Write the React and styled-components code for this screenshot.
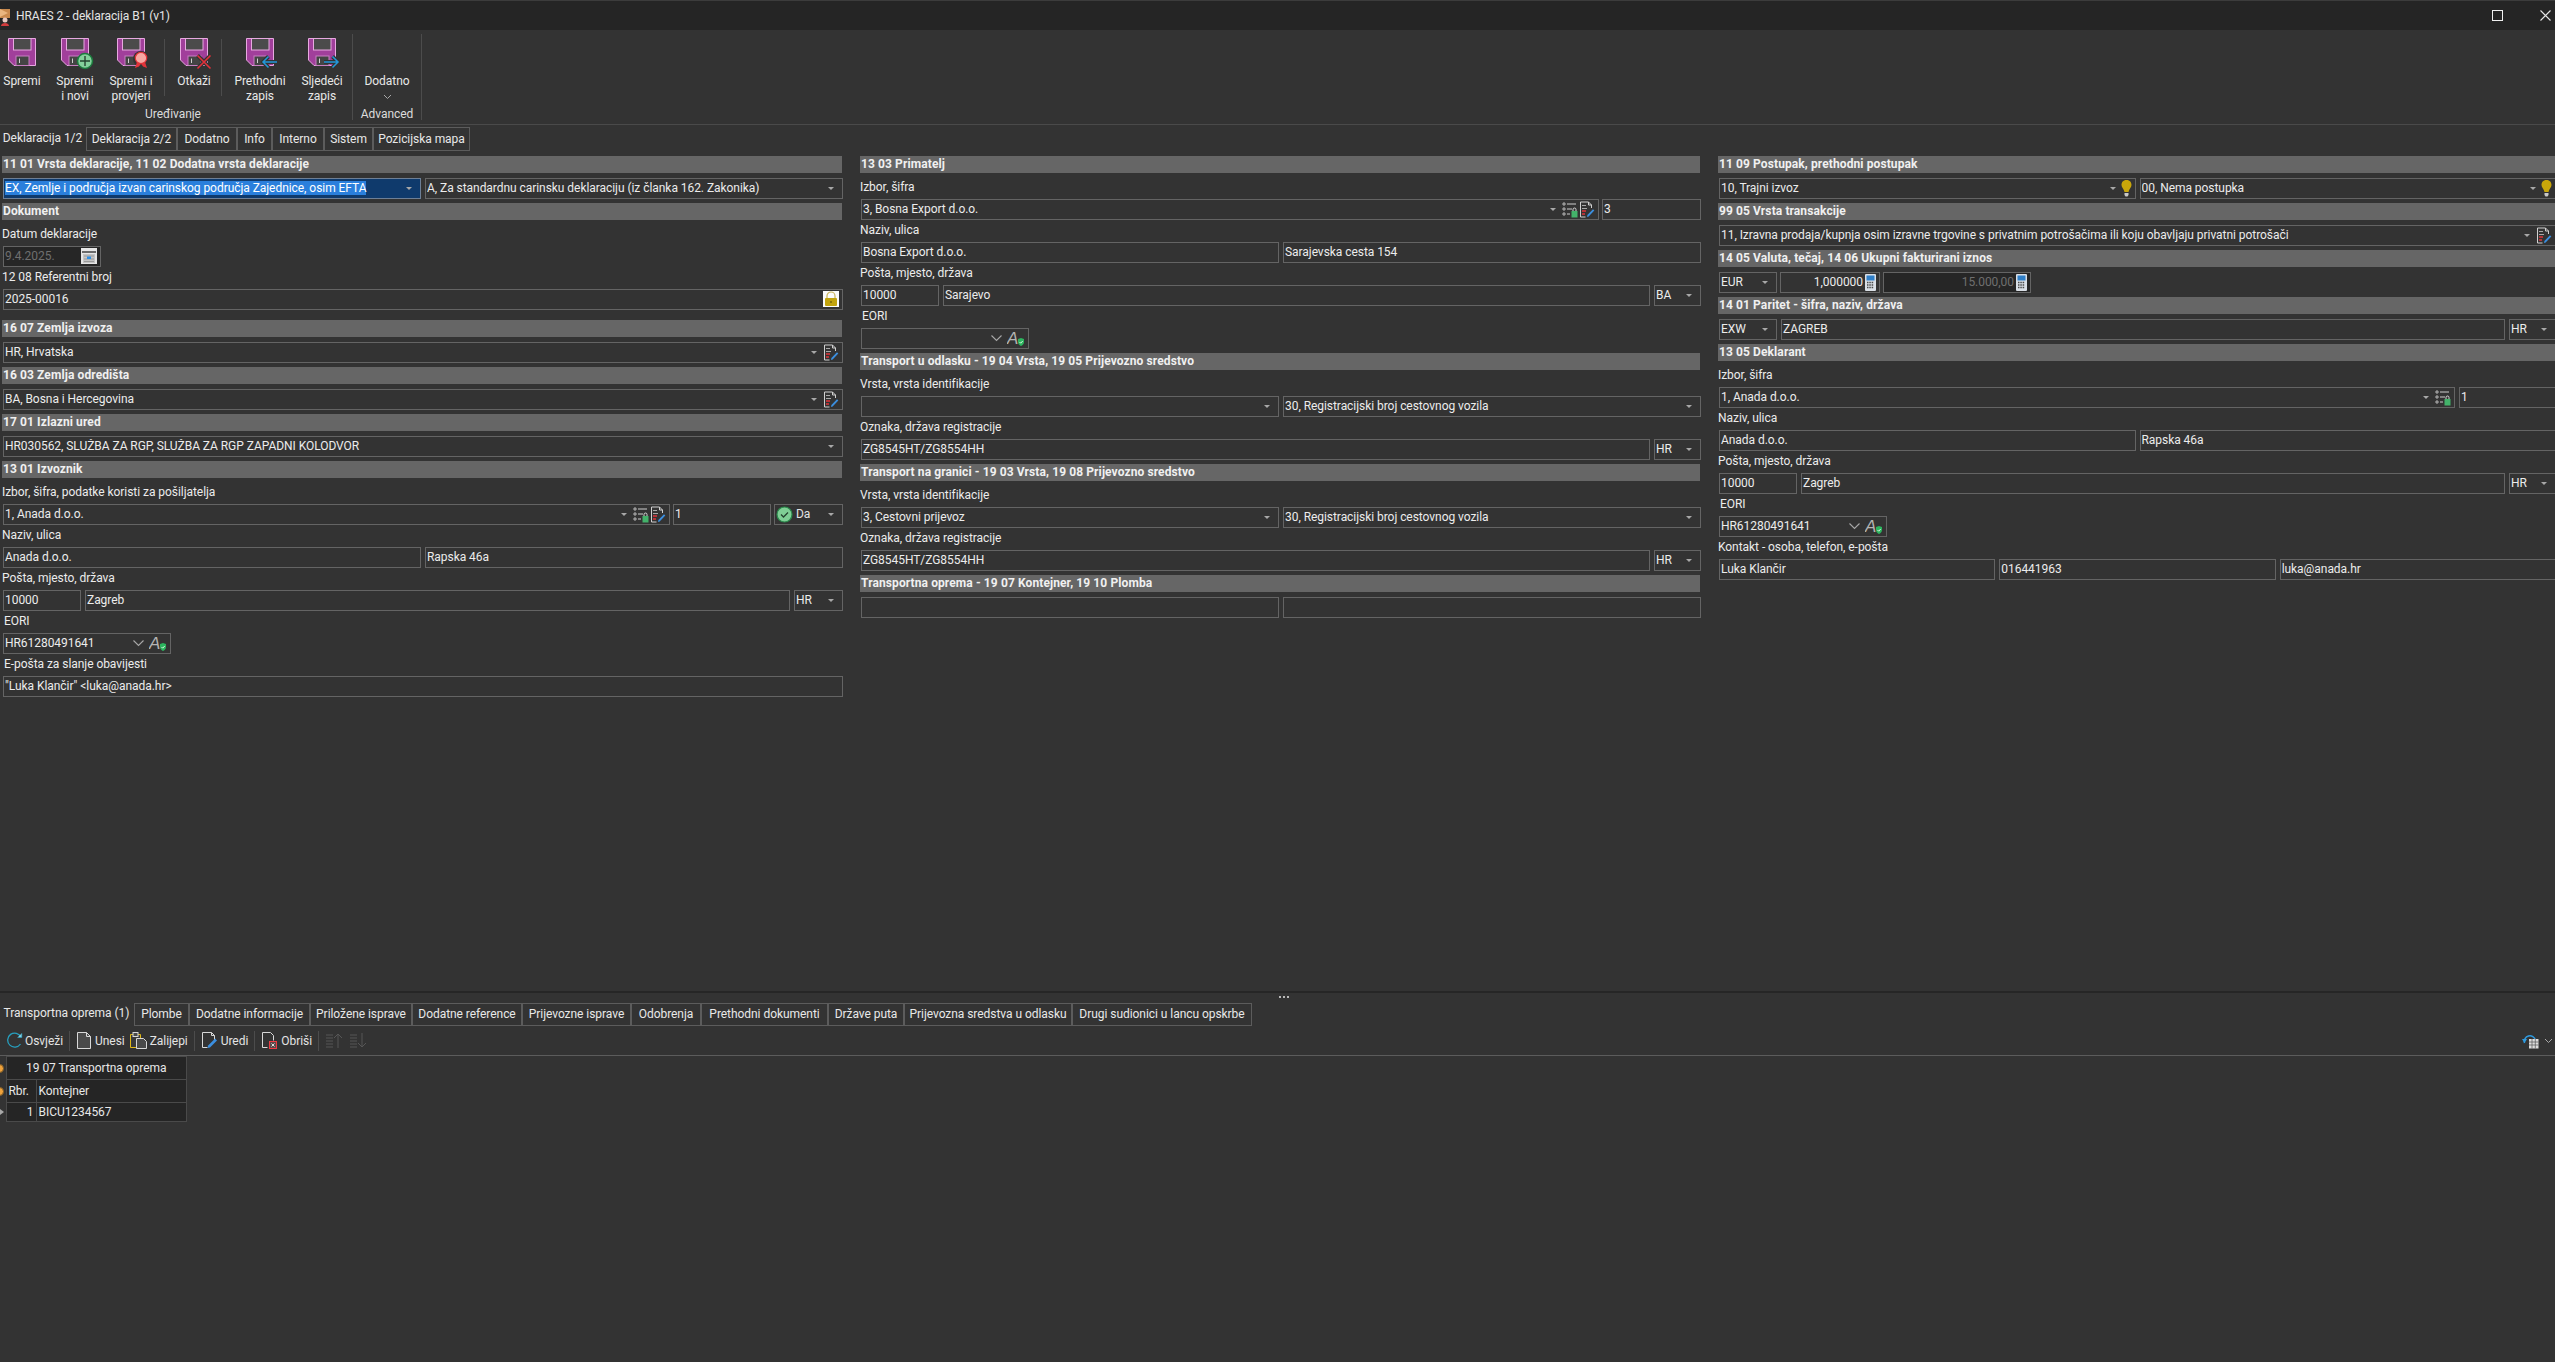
import React from 'react';
import styled, { createGlobalStyle } from 'styled-components';

const GlobalStyle = createGlobalStyle`
  html, body { margin: 0; padding: 0; background: #333333; }
  body { font-family: Roboto, "Noto Sans", sans-serif; font-size: 12px; letter-spacing: -0.05px; color: #ececec; }
  #root { height: 100vh; }
  * { box-sizing: border-box; }
`;

const Page = styled.div`
  height: 100vh;
  display: flex;
  flex-direction: column;
  overflow: hidden;
`;

const TitleBar = styled.div`
  height: 30px;
  flex: none;
  display: flex;
  align-items: center;
  background: #252525;
  border-top: 1px solid #3c3c3c;
`;

const TitleText = styled.span`
  margin-left: 6px;
  color: #e4e4e4;
  flex: 1;
`;

const WindowButton = styled.span`
  width: ${p => p.$w}px;
  display: flex;
  justify-content: center;
  align-items: center;
  margin-right: ${p => p.$mr || 0}px;
`;

const Ribbon = styled.div`
  height: 95px;
  flex: none;
  display: flex;
  border-bottom: 1px solid #4a4a4a;
`;

const RibbonGroup = styled.div`
  display: flex;
  flex-direction: column;
  padding-right: ${p => p.$pr || 0}px;
  margin-top: 4px;
  height: 86px;
  border-right: 1px solid #4c4c4c;
`;

const RibbonItems = styled.div`
  display: flex;
  height: 70px;
`;

const RibbonButton = styled.div`
  width: ${p => p.$w}px;
  display: flex;
  flex-direction: column;
  align-items: center;
  padding-top: 4px;
  text-align: center;
  line-height: 15px;
  color: #e8e8e8;
  svg { flex: none; margin-bottom: 8px; }
`;

const RibbonSpacer = styled.span`
  height: 36px;
  flex: none;
`;

const RibbonCaret = styled.svg`
  margin-top: 5px;
`;

const RibbonSep = styled.div`
  width: 1px;
  height: 57px;
  margin: 5px ${p => p.$r}px 0 ${p => p.$l}px;
  background: #4c4c4c;
`;

const GroupLabel = styled.div`
  text-align: center;
  line-height: 20px;
  color: #dcdcdc;
`;

const TabStrip = styled.div`
  display: flex;
  flex: none;
  height: ${p => p.$h}px;
`;

const Tab = styled.div`
  width: ${p => p.$w}px;
  margin-top: ${p => (p.$active ? 0 : 2)}px;
  padding-bottom: 1px;
  border: 1px solid ${p => (p.$active ? 'transparent' : '#5c5c5c')};
  border-left-width: ${p => (p.$first ? 0 : 1)}px;
  display: flex;
  align-items: center;
  justify-content: center;
  white-space: nowrap;
  color: #e8e8e8;
`;

const FormArea = styled.div`
  flex: 1;
  min-height: 0;
  display: grid;
  grid-template-columns: 840px 840px 837px;
  column-gap: 18px;
  align-items: start;
  padding: 5px 0 0 2px;
  overflow: hidden;
`;

const Column = styled.div`
  min-width: 0;
`;

const Section = styled.section`
  margin-bottom: ${p => p.$mb || 4}px;
`;

const SectionTitle = styled.h3`
  margin: 0 0 4px;
  height: 17px;
  padding-left: 1px;
  background: #666666;
  font-size: 12px;
  letter-spacing: 0.1px;
  line-height: 16px;
  font-weight: 700;
  color: #f0f0f0;
  white-space: nowrap;
`;

const Row = styled.div`
  display: grid;
  grid-template-columns: ${p => p.$cols || '1fr'};
  column-gap: ${p => (p.$gap === undefined ? 4 : p.$gap)}px;
  margin: 0 -1px 0 1px;
  ${SectionTitle} + & { margin-top: 5px; }
`;

const FieldLabel = styled.div`
  height: 22px;
  line-height: 20px;
  padding-left: ${p => p.$indent || 0}px;
  color: #ececec;
  white-space: nowrap;
`;

const Field = styled.div`
  height: 21px;
  min-width: 0;
  display: flex;
  align-items: center;
  padding: 0 3px 1px 1px;
  border: 1px solid #646464;
  background: ${p => (p.$disabled ? '#262626' : 'transparent')};
  color: ${p => (p.$disabled ? '#6f6f6f' : '#ececec')};
  overflow: hidden;
  white-space: nowrap;
  ${p => p.$width && `width: ${p.$width}px;`}
  ${p => p.$selected && 'background: #0f3a6c; border-color: #6d7f96;'}
  svg { flex: none; }
`;

const FieldText = styled.span`
  flex: 1;
  min-width: 0;
  overflow: hidden;
  text-align: ${p => (p.$right ? 'right' : 'left')};
  padding-right: ${p => (p.$right ? 2 : 0)}px;
`;

const Highlight = styled.span`
  background: #2a7fdc;
  color: #ffffff;
`;

const DropArrow = styled.i`
  flex: none;
  width: 0;
  height: 0;
  margin: 0 5px 0 4px;
  border-left: 3px solid transparent;
  border-right: 3px solid transparent;
  border-top: 3px solid #a8a8a8;
`;

const Chevron = styled.svg`
  margin-right: 4px;
`;

const Splitter = styled.div`
  height: 10px;
  flex: none;
  border-top: 2px solid #262626;
  display: flex;
  align-items: center;
  justify-content: center;
  padding-left: 12px;
`;

const GripDot = styled.i`
  width: 2px;
  height: 2px;
  margin: 0 1px;
  background: #b8b8b8;
`;

const BottomPanel = styled.div`
  height: 361px;
  flex: none;
`;

const Toolbar = styled.div`
  height: 30px;
  display: flex;
  align-items: center;
  padding-left: 6px;
  border-bottom: 1px solid #5c5c5c;
`;

const ToolButton = styled.div`
  display: flex;
  align-items: center;
  gap: ${p => p.$gap || 4}px;
  margin-right: ${p => p.$mr || 0}px;
  color: #e4e4e4;
  white-space: nowrap;
`;

const ToolSep = styled.i`
  width: 1px;
  height: 20px;
  background: #4c4c4c;
  margin: 0 7px 0 6px;
`;

const ToolRight = styled.div`
  margin-left: auto;
  margin-right: 2px;
  display: flex;
  align-items: center;
  gap: 5px;
`;

const GridTable = styled.table`
  border-collapse: collapse;
  table-layout: fixed;
  width: 187px;
  color: #e8e8e8;
`;

const Cell = styled.td`
  height: ${p => p.$h}px;
  padding: 0 2px;
  background: #252525;
  border: 1px solid #4a4a4a;
  text-align: ${p => p.$align || 'left'};
  white-space: nowrap;
  overflow: hidden;
`;

const IndicatorCell = styled.td`
  width: 6px;
  padding: 0;
  border: 0;
  overflow: hidden;
`;

const IndicatorStar = styled.i`
  display: block;
  width: 9px;
  height: 9px;
  margin-left: -5px;
  border-radius: 50%;
  background: #efa23c;
  border: 1px solid #7d5a24;
`;

const IndicatorArrow = styled.i`
  display: block;
  width: 0;
  height: 0;
  border-left: 4px solid #a8a8a8;
  border-top: 3px solid transparent;
  border-bottom: 3px solid transparent;
`;

// ikone

const FloppyIcon = ({ badge }) => (
  <svg width="28" height="28" viewBox="0 0 28 28" style={{ overflow: 'visible' }}>
    <path d="M.5.5h27v27H6L.5 22z" fill="#a13f9b" stroke="#e7a9e0" />
    <rect x="5.5" y=".5" width="17.5" height="11.5" fill="#4b4b4b" stroke="#e7a9e0" />
    <rect x="8" y="18" width="13" height="9.5" fill="#444444" stroke="#c77fc1" />
    <rect x="11" y="20.5" width="1" height="4.5" fill="#cfcfcf" />
    {badge === 'plus' && (
      <g>
        <circle cx="24" cy="23" r="7.5" fill="#83d19b" stroke="#1d7a3e" strokeWidth="1.5" />
        <path d="M24 18v10M19 23h10" stroke="#24442f" strokeWidth="1.4" />
      </g>
    )}
    {badge === 'award' && (
      <g>
        <circle cx="24" cy="21" r="8" fill="#333333" />
        <path d="M20 24l-2 6 4-1.500 2-3 2 3 4 1.500-2-6z" fill="#e2343a" />
        <circle cx="24" cy="20" r="5.700" fill="#f7a8a3" stroke="#e2343a" strokeWidth="1.200" />
      </g>
    )}
    {badge === 'cancel' && (
      <g>
        <path d="M17.500 17.500l13 13M30.500 17.500l-13 13" stroke="#333333" strokeWidth="4" />
        <path d="M17.500 17.500l13 13M30.500 17.500l-13 13" stroke="#e3303a" strokeWidth="1.600" />
      </g>
    )}
    {badge === 'prev' && (
      <g fill="none">
        <path d="M31 24H17M22.500 18.500L17 24l5.500 5.500" stroke="#333333" strokeWidth="4" />
        <path d="M31 24H17M22.500 18.500L17 24l5.500 5.500" stroke="#2398da" strokeWidth="1.500" />
      </g>
    )}
    {badge === 'next' && (
      <g fill="none">
        <path d="M16 24h14M24.500 18.500L30 24l-5.500 5.500" stroke="#333333" strokeWidth="4" />
        <path d="M16 24h14M24.500 18.500L30 24l-5.500 5.500" stroke="#2398da" strokeWidth="1.500" />
      </g>
    )}
  </svg>
);

const AppIcon = () => (
  <svg width="10" height="20" viewBox="0 0 10 20">
    <path d="M0 3h10v9H0z" fill="#c98a4e" />
    <path d="M0 3l8 4-8 4z" fill="#e9b680" />
    <circle cx="5" cy="14" r="2.500" fill="#e8c9c0" />
    <path d="M1 20c0-4 8-4 8 0z" fill="#d23c3c" />
  </svg>
);

const EditIcon = () => (
  <svg width="17" height="17" viewBox="0 0 17 17">
    <path d="M2.500 1h8l3 3v3M2.500 1v15h5M10.500 1v3h3" fill="none" stroke="#d0d0d0" />
    <path d="M4 10h4M4 13h3" stroke="#e0343a" strokeWidth="1.400" />
    <path d="M4 4.500h4M4 7.500h5" stroke="#a8a8a8" />
    <path d="M9 16l.4-2 5.600-5.800 1.300 1.300-5.600 5.900z" fill="#3b8fe0" />
  </svg>
);

const ListLockIcon = () => (
  <svg width="17" height="17" viewBox="0 0 17 17">
    <path d="M2 2h2v2H2zM2 7h2v2H2zM2 12h2v2H2z" fill="none" stroke="#cfcfcf" strokeWidth=".8" />
    <path d="M6 3h9M6 8h5M6 13h3" stroke="#cfcfcf" />
    <rect x="10.500" y="10" width="6" height="6.500" fill="#43b26a" />
    <path d="M12 10V8.500a1.500 1.500 0 013 0V10" fill="none" stroke="#d8d8d8" />
  </svg>
);

const BulbIcon = () => (
  <svg width="11" height="17" viewBox="0 0 11 17">
    <path d="M5.500 0C2 0 .5 2.500.5 5c0 2.500 2.500 4 3 7h4c.5-3 3-4.500 3-7 0-2.500-1.500-5-5-5z" fill="#c9a60a" />
    <path d="M3.500 13h4v2l-1 1.500h-2l-1-1.500z" fill="#c9c9c9" />
  </svg>
);

const LockIcon = () => (
  <svg width="16" height="16" viewBox="0 0 16 16">
    <rect width="16" height="16" fill="#fbfbfb" />
    <path d="M4 7V5a4 4 0 018 0v2" fill="none" stroke="#c8b45a" strokeWidth="1.200" />
    <rect x="2" y="7" width="12" height="8" rx="1" fill="#c2a40e" />
    <circle cx="8" cy="11" r="1" fill="#7a680a" />
  </svg>
);

const CalendarIcon = () => (
  <svg width="16" height="16" viewBox="0 0 16 16">
    <rect width="16" height="16" fill="#e6e6e6" />
    <rect x="1" y="3" width="14" height="2" fill="#6a6a6a" />
    <rect x="2" y="6" width="12" height="9" fill="#c4c4c4" />
    <path d="M3 8h10M3 11h10M3 13.500h10" stroke="#9a9a9a" />
    <rect x="6" y="8.500" width="4" height="2.500" fill="#2f8fe4" />
  </svg>
);

const CalcIcon = () => (
  <svg width="11" height="17" viewBox="0 0 11 17">
    <rect width="11" height="17" rx="1" fill="#d9dfe6" />
    <rect x="1.500" y="1.500" width="8" height="5" fill="#2f7fc8" />
    <path d="M2 8.500h7M2 11h7M2 13.500h7" stroke="#4a4a4a" strokeWidth="1.400" strokeDasharray="1.500 .8" />
  </svg>
);

const CheckCircleIcon = () => (
  <svg width="17" height="17" viewBox="0 0 17 17">
    <circle cx="8.500" cy="8.500" r="7.500" fill="#7fcf95" stroke="#2a8a4c" strokeWidth="1.200" />
    <path d="M5 8.500l2.500 2.500 4.500-4.500" fill="none" stroke="#24442f" strokeWidth="1.300" />
  </svg>
);

const ValidateIcon = () => (
  <svg width="18" height="17" viewBox="0 0 18 17">
    <text x="0" y="14" fontFamily="Liberation Sans, sans-serif" fontStyle="italic" fontSize="17" fill="#b4b4b4">A</text>
    <path d="M11 9l3-1 3 1v3c0 2-1.700 3.500-3 4-1.300-.5-3-2-3-4z" fill="#2cb45e" />
    <path d="M12.500 12l1.200 1.200 2-2.200" fill="none" stroke="#d9f5e2" />
  </svg>
);

const DownChevron = () => (
  <Chevron width="13" height="8" viewBox="0 0 13 8">
    <path d="M1.500 1.500l5 5 5-5" fill="none" stroke="#a8a8a8" strokeWidth="1.100" />
  </Chevron>
);

const RefreshIcon = () => (
  <svg width="17" height="17" viewBox="0 0 17 17">
    <path d="M14.500 12a7 7 0 11.500-7" fill="none" stroke="#27a0bf" strokeWidth="1.300" />
    <path d="M15.800 1.200v4.300h-4.300" fill="#7fd0e4" stroke="#27a0bf" strokeWidth=".6" />
  </svg>
);

const PageIcon = () => (
  <svg width="14" height="17" viewBox="0 0 14 17">
    <path d="M.5.500h9l4 4v12H.500z" fill="#4a4a4a" stroke="#d8d8d8" />
    <path d="M9.500.500v4h4" fill="none" stroke="#d8d8d8" />
  </svg>
);

const PasteIcon = () => (
  <svg width="17" height="17" viewBox="0 0 17 17">
    <path d="M.5 2.500h10v13H.500z" fill="#3a3a3a" stroke="#e0b818" />
    <rect x="3" y=".5" width="5" height="4" fill="#4a4a4a" stroke="#d8d8d8" />
    <path d="M6.500 6.500h7l3 3v7h-10z" fill="#4a4a4a" stroke="#d8d8d8" />
  </svg>
);

const PageEditIcon = () => (
  <svg width="17" height="17" viewBox="0 0 17 17">
    <path d="M.5.500h9l3 3v6M.500.500v15h5M9.500.500v3h3" fill="none" stroke="#d8d8d8" />
    <path d="M5.500 16l.6-2.500 7-7 1.900 1.900-7 7z" fill="#3b8fe0" />
  </svg>
);

const PageDeleteIcon = () => (
  <svg width="15" height="17" viewBox="0 0 15 17">
    <path d="M.5.500h8l3 3v5M.500.500v15h5" fill="none" stroke="#d8d8d8" />
    <rect x="7.500" y="9.500" width="7" height="7" fill="#5b4a4a" stroke="#ef3b43" />
    <path d="M9.500 11.500l3 3M12.500 11.500l-3 3" stroke="#e0e0e0" />
  </svg>
);

const MoveIcon = ({ down }) => (
  <svg width="17" height="17" viewBox="0 0 17 17">
    <path d="M0 3h7M0 6h7M0 9h7M0 12h7M0 15h7" stroke="#565656" />
    <path d={down ? 'M12 1v14M8 11l4 4 4-4' : 'M12 16V2M8 6l4-4 4 4'} fill="none" stroke="#565656" />
  </svg>
);

const LayoutIcon = () => (
  <svg width="17" height="17" viewBox="0 0 17 17">
    <path d="M2.500 11a5.500 5.500 0 0111 -3" fill="none" stroke="#2f9be0" strokeWidth="1.500" />
    <path d="M0 7l2.500 4L5 7z" fill="#2f9be0" />
    <rect x="7" y="7" width="9.500" height="9.500" fill="#dcdcdc" />
    <path d="M7 10h9.500M7 13h9.500M10 7v9.500M13.300 7v9.500" stroke="#555" strokeWidth=".7" />
  </svg>
);

// podaci

const mainTabs = [
  ['Deklaracija 1/2', 86], ['Deklaracija 2/2', 91], ['Dodatno', 60], ['Info', 35],
  ['Interno', 52], ['Sistem', 49], ['Pozicijska mapa', 97],
];

const lowerTabs = [
  ['Transportna oprema (1)', 134], ['Plombe', 55], ['Dodatne informacije', 121], ['Priložene isprave', 102],
  ['Dodatne reference', 110], ['Prijevozne isprave', 109], ['Odobrenja', 70], ['Prethodni dokumenti', 127],
  ['Države puta', 76], ['Prijevozna sredstva u odlasku', 168], ['Drugi sudionici u lancu opskrbe', 180],
];

const Select = ({ children, icon, ...rest }) => (
  <Field {...rest}>
    <FieldText>{children}</FieldText>
    <DropArrow />
    {icon}
  </Field>
);

const TabRow = ({ tabs, height }) => (
  <TabStrip $h={height}>
    {tabs.map(([label, w], i) => (
      <Tab key={label} $w={w} $active={i === 0} $first={i === 0}>{label}</Tab>
    ))}
  </TabStrip>
);

const Eori = ({ value }) => (
  <Field $width={168}>
    <FieldText>{value}</FieldText>
    <DownChevron />
    <ValidateIcon />
  </Field>
);

const Exporter = () => (
  <Section>
    <SectionTitle>13 01 Izvoznik</SectionTitle>
    <FieldLabel>Izbor, šifra, podatke koristi za pošiljatelja</FieldLabel>
    <Row $cols="1fr 98px 69px" $gap={3}>
      <Select icon={<><ListLockIcon /><EditIcon /></>}>1, Anada d.o.o.</Select>
      <Field>1</Field>
      <Select>
        <ToolButton $gap={3}><CheckCircleIcon />Da</ToolButton>
      </Select>
    </Row>
    <FieldLabel>Naziv, ulica</FieldLabel>
    <Row $cols="1fr 1fr">
      <Field>Anada d.o.o.</Field>
      <Field>Rapska 46a</Field>
    </Row>
    <FieldLabel>Pošta, mjesto, država</FieldLabel>
    <Row $cols="78px 1fr 49px">
      <Field>10000</Field>
      <Field>Zagreb</Field>
      <Select>HR</Select>
    </Row>
    <FieldLabel $indent={2}>EORI</FieldLabel>
    <Row><Eori value="HR61280491641" /></Row>
    <FieldLabel $indent={2}>E-pošta za slanje obavijesti</FieldLabel>
    <Row><Field>"Luka Klančir" &lt;luka@anada.hr&gt;</Field></Row>
  </Section>
);

const TransportBlock = ({ title, kind }) => (
  <Section>
    <SectionTitle>{title}</SectionTitle>
    <FieldLabel>Vrsta, vrsta identifikacije</FieldLabel>
    <Row $cols="1fr 1fr">
      <Select>{kind}</Select>
      <Select>30, Registracijski broj cestovnog vozila</Select>
    </Row>
    <FieldLabel>Oznaka, država registracije</FieldLabel>
    <Row $cols="1fr 47px">
      <Field>ZG8545HT/ZG8554HH</Field>
      <Select>HR</Select>
    </Row>
  </Section>
);

export default function App() {
  return (
    <Page>
      <GlobalStyle />
      <TitleBar>
        <AppIcon />
        <TitleText>HRAES 2 - deklaracija B1 (v1)</TitleText>
        <WindowButton $w={48} $mr={14}>
          <svg width="11" height="11" viewBox="0 0 11 11"><rect x=".5" y=".5" width="10" height="10" fill="none" stroke="#f0f0f0" /></svg>
        </WindowButton>
        <WindowButton $w={20}>
          <svg width="11" height="11" viewBox="0 0 11 11"><path d="M.5.5l10 10M10.500.5l-10 10" stroke="#e6e6e6" strokeWidth="1.100" /></svg>
        </WindowButton>
      </TitleBar>

      <Ribbon>
        <RibbonGroup $pr={6}>
          <RibbonItems>
            <RibbonButton $w={44}><FloppyIcon />Spremi</RibbonButton>
            <RibbonButton $w={62}><FloppyIcon badge="plus" />Spremi<br />i novi</RibbonButton>
            <RibbonButton $w={50}><FloppyIcon badge="award" />Spremi i<br />provjeri</RibbonButton>
            <RibbonSep $l={8} $r={7} />
            <RibbonButton $w={44}><FloppyIcon badge="cancel" />Otkaži</RibbonButton>
            <RibbonSep $l={5} $r={0} />
            <RibbonButton $w={76}><FloppyIcon badge="prev" />Prethodni<br />zapis</RibbonButton>
            <RibbonButton $w={48}><FloppyIcon badge="next" />Sljedeći<br />zapis</RibbonButton>
          </RibbonItems>
          <GroupLabel>Uređivanje</GroupLabel>
        </RibbonGroup>
        <RibbonGroup>
          <RibbonItems>
            <RibbonButton $w={68}>
              <RibbonSpacer />
              Dodatno
              <RibbonCaret width="9" height="6" viewBox="0 0 9 6">
                <path d="M1 1l3.500 3.500L8 1" fill="none" stroke="#a8a8a8" />
              </RibbonCaret>
            </RibbonButton>
          </RibbonItems>
          <GroupLabel>Advanced</GroupLabel>
        </RibbonGroup>
      </Ribbon>

      <TabRow tabs={mainTabs} height={26} />

      <FormArea>
        <Column>
          <Section>
            <SectionTitle>11 01 Vrsta deklaracije, 11 02 Dodatna vrsta deklaracije</SectionTitle>
            <Row $cols="1fr 1fr">
              <Select $selected><Highlight>EX, Zemlje i područja izvan carinskog područja Zajednice, osim EFTA</Highlight></Select>
              <Select>A, Za standardnu carinsku deklaraciju (iz članka 162. Zakonika)</Select>
            </Row>
          </Section>
          <Section $mb={10}>
            <SectionTitle>Dokument</SectionTitle>
            <FieldLabel>Datum deklaracije</FieldLabel>
            <Row>
              <Field $disabled $width={98}>
                <FieldText>9.4.2025.</FieldText>
                <CalendarIcon />
              </Field>
            </Row>
            <FieldLabel>12 08 Referentni broj</FieldLabel>
            <Row>
              <Field>
                <FieldText>2025-00016</FieldText>
                <LockIcon />
              </Field>
            </Row>
          </Section>
          <Section>
            <SectionTitle>16 07 Zemlja izvoza</SectionTitle>
            <Row><Select icon={<EditIcon />}>HR, Hrvatska</Select></Row>
          </Section>
          <Section>
            <SectionTitle>16 03 Zemlja odredišta</SectionTitle>
            <Row><Select icon={<EditIcon />}>BA, Bosna i Hercegovina</Select></Row>
          </Section>
          <Section>
            <SectionTitle>17 01 Izlazni ured</SectionTitle>
            <Row><Select>HR030562, SLUŽBA ZA RGP, SLUŽBA ZA RGP ZAPADNI KOLODVOR</Select></Row>
          </Section>
          <Exporter />
        </Column>

        <Column>
          <Section>
            <SectionTitle>13 03 Primatelj</SectionTitle>
            <FieldLabel>Izbor, šifra</FieldLabel>
            <Row $cols="1fr 99px" $gap={3}>
              <Select icon={<><ListLockIcon /><EditIcon /></>}>3, Bosna Export d.o.o.</Select>
              <Field>3</Field>
            </Row>
            <FieldLabel>Naziv, ulica</FieldLabel>
            <Row $cols="1fr 1fr">
              <Field>Bosna Export d.o.o.</Field>
              <Field>Sarajevska cesta 154</Field>
            </Row>
            <FieldLabel>Pošta, mjesto, država</FieldLabel>
            <Row $cols="78px 1fr 47px">
              <Field>10000</Field>
              <Field>Sarajevo</Field>
              <Select>BA</Select>
            </Row>
            <FieldLabel $indent={2}>EORI</FieldLabel>
            <Row><Eori value="" /></Row>
          </Section>
          <TransportBlock title="Transport u odlasku - 19 04 Vrsta, 19 05 Prijevozno sredstvo" kind="" />
          <TransportBlock title="Transport na granici - 19 03 Vrsta, 19 08 Prijevozno sredstvo" kind="3, Cestovni prijevoz" />
          <Section>
            <SectionTitle>Transportna oprema - 19 07 Kontejner, 19 10 Plomba</SectionTitle>
            <Row $cols="1fr 1fr">
              <Field />
              <Field />
            </Row>
          </Section>
        </Column>

        <Column>
          <Section>
            <SectionTitle>11 09 Postupak, prethodni postupak</SectionTitle>
            <Row $cols="1fr 1fr">
              <Select icon={<BulbIcon />}>10, Trajni izvoz</Select>
              <Select icon={<BulbIcon />}>00, Nema postupka</Select>
            </Row>
          </Section>
          <Section>
            <SectionTitle>99 05 Vrsta transakcije</SectionTitle>
            <Row>
              <Select icon={<EditIcon />}>11, Izravna prodaja/kupnja osim izravne trgovine s privatnim potrošačima ili koju obavljaju privatni potrošači</Select>
            </Row>
          </Section>
          <Section>
            <SectionTitle>14 05 Valuta, tečaj, 14 06 Ukupni fakturirani iznos</SectionTitle>
            <Row $cols="58px 100px 148px" $gap={3}>
              <Select>EUR</Select>
              <Field><FieldText $right>1,000000</FieldText><CalcIcon /></Field>
              <Field $disabled><FieldText $right>15.000,00</FieldText><CalcIcon /></Field>
            </Row>
          </Section>
          <Section>
            <SectionTitle>14 01 Paritet - šifra, naziv, država</SectionTitle>
            <Row $cols="58px 1fr 47px">
              <Select>EXW</Select>
              <Field>ZAGREB</Field>
              <Select>HR</Select>
            </Row>
          </Section>
          <Section>
            <SectionTitle>13 05 Deklarant</SectionTitle>
            <FieldLabel>Izbor, šifra</FieldLabel>
            <Row $cols="1fr 97px">
              <Select icon={<ListLockIcon />}>1, Anada d.o.o.</Select>
              <Field>1</Field>
            </Row>
            <FieldLabel>Naziv, ulica</FieldLabel>
            <Row $cols="1fr 1fr">
              <Field>Anada d.o.o.</Field>
              <Field>Rapska 46a</Field>
            </Row>
            <FieldLabel>Pošta, mjesto, država</FieldLabel>
            <Row $cols="78px 1fr 47px">
              <Field>10000</Field>
              <Field>Zagreb</Field>
              <Select>HR</Select>
            </Row>
            <FieldLabel $indent={2}>EORI</FieldLabel>
            <Row><Eori value="HR61280491641" /></Row>
            <FieldLabel>Kontakt - osoba, telefon, e-pošta</FieldLabel>
            <Row $cols="1fr 1fr 1fr">
              <Field>Luka Klančir</Field>
              <Field>016441963</Field>
              <Field>luka@anada.hr</Field>
            </Row>
          </Section>
        </Column>
      </FormArea>

      <Splitter><GripDot /><GripDot /><GripDot /></Splitter>

      <BottomPanel>
        <TabRow tabs={lowerTabs} height={25} />
        <Toolbar>
          <ToolButton $gap={2}><RefreshIcon />Osvježi</ToolButton>
          <ToolSep />
          <ToolButton $gap={4} $mr={5}><PageIcon />Unesi</ToolButton>
          <ToolButton $gap={3}><PasteIcon />Zalijepi</ToolButton>
          <ToolSep />
          <ToolButton $gap={2}><PageEditIcon />Uredi</ToolButton>
          <ToolSep />
          <ToolButton $gap={4}><PageDeleteIcon />Obriši</ToolButton>
          <ToolSep />
          <ToolButton $mr={7}><MoveIcon /></ToolButton>
          <ToolButton><MoveIcon down /></ToolButton>
          <ToolRight>
            <LayoutIcon />
            <svg width="9" height="6" viewBox="0 0 9 6"><path d="M1 1l3.500 3.500L8 1" fill="none" stroke="#a8a8a8" /></svg>
          </ToolRight>
        </Toolbar>
        <GridTable>
          <colgroup>
            <col style={{ width: 6 }} />
            <col style={{ width: 30 }} />
            <col />
          </colgroup>
          <tbody>
            <tr>
              <IndicatorCell><IndicatorStar /></IndicatorCell>
              <Cell $h={23} colSpan={2} $align="center">19 07 Transportna oprema</Cell>
            </tr>
            <tr>
              <IndicatorCell><IndicatorStar /></IndicatorCell>
              <Cell $h={23}>Rbr.</Cell>
              <Cell $h={23}>Kontejner</Cell>
            </tr>
            <tr>
              <IndicatorCell><IndicatorArrow /></IndicatorCell>
              <Cell $h={19} $align="right">1</Cell>
              <Cell $h={19}>BICU1234567</Cell>
            </tr>
          </tbody>
        </GridTable>
      </BottomPanel>
    </Page>
  );
}
